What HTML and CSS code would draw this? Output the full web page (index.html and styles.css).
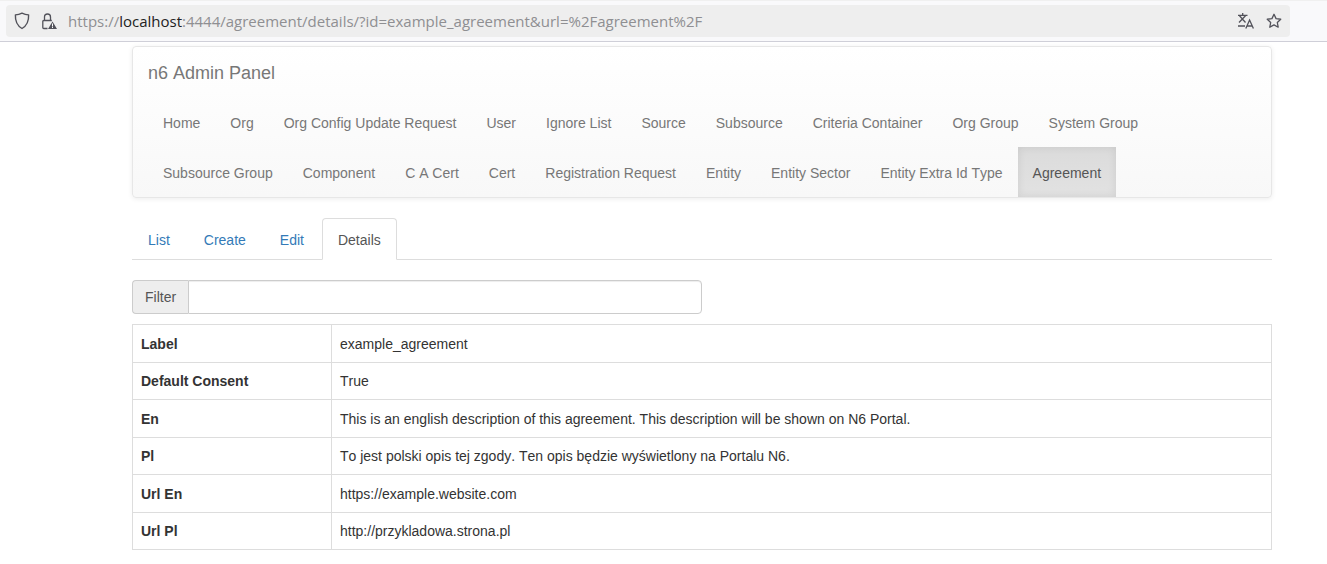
FILE: index.html
```html
<!DOCTYPE html>
<html lang="en">
<head>
<meta charset="utf-8">
<title>n6 Admin Panel</title>
<link rel="stylesheet" href="styles.css">
</head>
<body>
<header class="toolbar">
  <div class="urlbar">
    <svg class="ic ic-shield" width="16" height="18" viewBox="0 0 16 18"><path d="M8 1.200c2.200 1.100 4.400 1.600 6.600 1.700.3 6-1.700 10.800-6.600 13.600C3.100 13.700 1.100 8.900 1.400 2.900 3.600 2.800 5.800 2.300 8 1.200z" fill="none" stroke="#52525a" stroke-width="1.400" stroke-linejoin="round"/></svg>
    <svg class="ic ic-lock" width="16" height="17" viewBox="0 0 16 17"><path d="M3.500 7.500V4a3 3 0 0 1 6 0v3.500" fill="none" stroke="#52525a" stroke-width="1.300"/><path d="M6.500 15.500H2.800a1 1 0 0 1-1-1V8.500a1 1 0 0 1 1-1h8" fill="none" stroke="#52525a" stroke-width="1.300"/><path d="M11.500 8.500 16 16H7z" fill="#52525a"/><rect x="11" y="10.500" width="1" height="3" fill="#fff"/><rect x="11" y="14" width="1" height="1" fill="#fff"/></svg>
    <div class="url"><span class="dim">https://</span><span class="host">localhost</span><span class="dim">:4444/agreement/details/?id=example_agreement&amp;url=%2Fagreement%2F</span></div>
    <svg class="ic ic-translate" width="18" height="18" viewBox="0 0 18 18"><path d="M1 3.300h9.500M5.700 1v2.300M2.500 3.800 8.500 10.500M8.500 3.800 2 10.500M1 14h7" fill="none" stroke="#52525a" stroke-width="1.300"/><path d="M8.800 16.500 12.600 8l3.800 8.500M10 14h5.200" fill="none" stroke="#52525a" stroke-width="1.300"/></svg>
    <svg class="ic ic-star" width="16" height="16" viewBox="0 0 16 16"><path d="M8 1.300l2.050 4.350 4.700.6-3.450 3.250.9 4.700L8 11.900l-4.200 2.300.9-4.700L1.250 6.250l4.700-.6z" fill="none" stroke="#52525a" stroke-width="1.300" stroke-linejoin="round"/></svg>
  </div>
</header>
<main class="container">
  <nav class="navbar">
    <a class="brand" href="#">n6 Admin Panel</a>
    <ul class="nav">
      <li><a href="#">Home</a></li>
      <li><a href="#">Org</a></li>
      <li><a href="#">Org Config Update Request</a></li>
      <li><a href="#">User</a></li>
      <li><a href="#">Ignore List</a></li>
      <li><a href="#">Source</a></li>
      <li><a href="#">Subsource</a></li>
      <li><a href="#">Criteria Container</a></li>
      <li><a href="#">Org Group</a></li>
      <li><a href="#">System Group</a></li>
      <li><a href="#">Subsource Group</a></li>
      <li><a href="#">Component</a></li>
      <li><a href="#">C A Cert</a></li>
      <li><a href="#">Cert</a></li>
      <li><a href="#">Registration Request</a></li>
      <li><a href="#">Entity</a></li>
      <li><a href="#">Entity Sector</a></li>
      <li><a href="#">Entity Extra Id Type</a></li>
      <li class="active"><a href="#">Agreement</a></li>
    </ul>
  </nav>
  <ul class="tabs">
    <li><a href="#">List</a></li>
    <li><a href="#">Create</a></li>
    <li><a href="#">Edit</a></li>
    <li class="active"><a href="#">Details</a></li>
  </ul>
  <div class="filter">
    <span class="filter-label">Filter</span>
    <input class="filter-input" type="text" aria-label="Filter">
  </div>
  <table class="details">
    <tbody>
      <tr><th>Label</th><td>example_agreement</td></tr>
      <tr><th>Default Consent</th><td>True</td></tr>
      <tr><th>En</th><td>This is an english description of this agreement. This description will be shown on N6 Portal.</td></tr>
      <tr><th>Pl</th><td>To jest polski opis tej zgody. Ten opis będzie wyświetlony na Portalu N6.</td></tr>
      <tr><th>Url En</th><td>https://example.website.com</td></tr>
      <tr><th>Url Pl</th><td>http://przykladowa.strona.pl</td></tr>
    </tbody>
  </table>
</main>
</body>
</html>
```
FILE: styles.css
```css
* { box-sizing: border-box; }
html, body { margin: 0; padding: 0; }
body {
  font-family: "Liberation Sans", Arial, sans-serif;
  font-size: 14px;
  line-height: 20px;
  font-kerning: none;
  color: #333;
  background: #fff;
  overflow: hidden;
}
a { text-decoration: none; }
ul { list-style: none; margin: 0; padding: 0; }

.toolbar {
  height: 42px;
  padding: 5px 37px 0 6px;
  background: #f9f9fb;
  border-top: 1px solid #f0f0f0;
  border-bottom: 1px solid #cfcfd8;
}
.urlbar {
  height: 32px;
  margin-top: -1px;
  display: flex;
  align-items: center;
  background: #eeeeee;
  border-radius: 4px;
  padding: 0 8px 0 8px;
}
.ic { flex: none; display: block; }
.ic-shield { margin-right: 11px; }
.ic-lock { margin-right: 11px; }
.url {
  flex: 1;
  min-width: 0;
  font-family: "Open Sans", sans-serif;
  font-size: 15px;
  font-kerning: normal;
  white-space: nowrap;
  overflow: hidden;
}
.dim { color: #8f8f92; }
.host { color: #222; }
.ic-translate { margin-right: 11px; }

.container {
  width: 1140px;
  margin: 4px 0 0 132px;
}

.navbar {
  height: 152px;
  padding: 0 15px;
  border: 1px solid #e7e7e7;
  border-radius: 4px;
  background: linear-gradient(to bottom, #fff 0, #f8f8f8 100%);
  box-shadow: 0 1px 5px rgba(0, 0, 0, .075);
}
.brand {
  display: block;
  height: 50px;
  padding: 16px 0 14px;
  font-size: 18px;
  color: #777;
}
.nav { display: flex; flex-wrap: wrap; }
.nav a {
  display: block;
  height: 50px;
  padding: 16px 15px 14px;
  color: #777;
}
.nav .active a {
  color: #555;
  background: linear-gradient(to bottom, #dbdbdb 0, #e2e2e2 100%);
  box-shadow: inset 0 0 9px rgba(0, 0, 0, .09);
}

.tabs {
  display: flex;
  height: 42px;
  margin-top: 20px;
  border-bottom: 1px solid #ddd;
}
.tabs a {
  display: block;
  height: 42px;
  padding: 11px 15px 9px;
  margin-right: 2px;
  color: #337ab7;
  border: 1px solid transparent;
  border-radius: 4px 4px 0 0;
}
.tabs .active a {
  color: #555;
  background: #fff;
  border-color: #ddd #ddd #fff;
}

.filter {
  display: flex;
  width: 570px;
  height: 34px;
  margin-top: 20px;
}
.filter-label {
  flex: none;
  width: 56px;
  padding: 6px 12px;
  color: #555;
  background: #eee;
  border: 1px solid #ccc;
  border-right: 0;
  border-radius: 4px 0 0 4px;
}
.filter-input {
  flex: 1;
  min-width: 0;
  border: 1px solid #ccc;
  border-radius: 0 4px 4px 0;
  background: #fff;
  box-shadow: inset 0 1px 1px rgba(0, 0, 0, .075);
  outline: none;
}

.details {
  width: 100%;
  margin-top: 10px;
  border-collapse: collapse;
  table-layout: fixed;
}
.details th, .details td {
  height: 37px;
  padding: 8px;
  border: 1px solid #ddd;
  text-align: left;
  vertical-align: top;
}
.details tr:nth-child(odd) th, .details tr:nth-child(odd) td {
  height: 38px;
  padding-top: 9px;
}
.details th { width: 199px; font-weight: bold; }
```
